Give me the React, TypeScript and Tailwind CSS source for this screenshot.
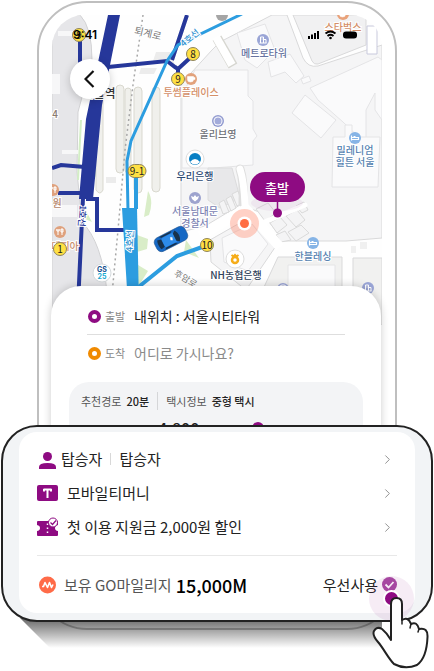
import { ReactNode } from "react";
import { ChevronRight } from "lucide-react";

const PURPLE = "#8e0b82";

function Exit({ x, y, n, w = 13 }: { x: number; y: number; n: string; w?: number }) {
  return (
    <g>
      <rect x={x - w / 2} y={y - 6.5} width={w} height={13} rx={6.5} fill="#ffe043" stroke="#8f845a" strokeWidth={1} />
      <text x={x} y={y + 4} textAnchor="middle" fontSize={10} fill="#222">
        {n}
      </text>
    </g>
  );
}

function Place({ x, y, color, lines, size = 10 }: { x: number; y: number; color: string; lines: string[]; size?: number }) {
  return (
    <text textAnchor="middle" fontSize={size} fontWeight={500} fill={color} stroke="#fff" strokeWidth={2} paintOrder="stroke">
      {lines.map((line, i) => (
        <tspan key={line} x={x} y={y + i * 12}>
          {line}
        </tspan>
      ))}
    </text>
  );
}

function Marker({ x, y, fill, kind }: { x: number; y: number; fill: string; kind: "cup" | "bed" | "building" | "fork" | "dot" | "shield" }) {
  return (
    <g transform={`translate(${x} ${y})`}>
      <circle r={6} fill={fill} />
      {kind === "cup" && <path d="M-3.5-2.500h6v3q0 2.500-3 2.500t-3-2.500zM2.500-1.500h1.500v2H2.500" fill="#fff" stroke="#fff" strokeWidth={0.5} />}
      {kind === "bed" && <path d="M-3.5-2.500v5M-3.500 1.500h7v-2h-7M-1.500-1.500h2" stroke="#fff" strokeWidth={1.200} fill="none" />}
      {kind === "building" && <path d="M-2.500 3v-6h3v6M.5-.5h2.500V3M-3.500 3h7M-1-1.500v1" stroke="#fff" fill="none" />}
      {kind === "fork" && <path d="M-2-3v6M-3.200-3v2h2.400v-2M2-3v6M1-3h2v3H1z" stroke="#fff" fill="none" />}
      {kind === "dot" && (
        <>
          <circle r={4.500} fill="#fff" />
          <circle r={3.500} fill="#a3abda" />
        </>
      )}
      {kind === "shield" && <path d="M-4-2l2.500 1L0-3l1.500 2L4-2 3 1 0 3.500-3 1z" fill="#fff" />}
    </g>
  );
}

function CityMap() {
  return (
    <svg
      viewBox="52 15 330 310"
      preserveAspectRatio="xMidYMin slice"
      className="block h-[310px] w-full rounded-t-[32px] font-['Noto_Sans_CJK_KR',sans-serif]"
      role="img"
      aria-label="지도"
    >
      <rect x={52} y={15} width={330} height={310} fill="#fefefe" />
      <path d="M52 15h28q12 12 12 45L78 112l-1 60 5 50q20 20 25 70v33H52z" fill="#e6e6e9" stroke="#d2d2d4" />
      <path d="M58 31h24v5H58zM62 150h16v4H62zM52 74h8v20h-8zM52 205h25v12H52z" fill="#f7f7f8" />
      <path d="M80 120h2l-3 60h-2zM84 207l8 15-9-4zM82 166h14v10l-8 16h-6z" fill="#d3eec5" />
      {/* Railway platforms */}
      <g fill="#f0f0ec" stroke="#d9d8cf">
        <path d="M96 100h7v90q-3 6-7 0z" />
        <rect x={116} y={85} width={8} height={88} rx={4} />
        <rect x={125} y={88} width={6} height={85} rx={3} />
        <rect x={134} y={87} width={8} height={106} rx={4} />
        <rect x={152} y={87} width={8} height={105} rx={4} />
      </g>
      <path d="M156 52h14l5 13-22-4zM141 68h16l-3 6h-15zM106 177h10v6h-10z" fill="#ececec" />
      {/* City blocks */}
      <g fill="#f5f5f6" stroke="#d9d9da">
        <path d="M181 232V84L212 50l8-8 52-27h15l16 43q5 10 15 8l64-21v193l-36 3h-62l-22-28-22-8-35 21z" />
        <path d="M293 15h73v30l-48 19q-4 1-6-3z" fill="#f1f1f2" />
        <path d="M210 240l42-24 26 27-32 47-35-28z" />
        <path d="M258 300l20-43h64v68h-84zM353 258h29v67h-29z" fill="#f1f1f0" />
      </g>
      <g fill="#fafafb" stroke="#e4e4e6">
        <path d="M182 95l13-25h53v26l5 5v28l4 7-4 5v24l-40 3h-31z" />
        <path d="M310 88l68-31 4 3v60l-7-10v-17l-9 17v34l-23-22-25-22z" />
        <path d="M305 95l31 25-15 18-29-25z" />
        <path d="M237 33l28-9 10 26-18 18-12-8z" />
        <path d="M268 62l22-8 14 22-8 7-11-11-14 5zM301 79l8-3 2 5-8 3z" />
        <path d="M333 137h12v-12h7v12h28l-2 50h-46z" />
        <path d="M222 238l30-14 16 20-20 27-24-9z" />
        <path d="M288 265h47v60h-47z" />
      </g>
      <path d="M208 168h24l8 30-20 10-12-8z" fill="#e8e8ea" stroke="#dcdcdd" />
      <g fill="#f4f4f5" stroke="#dadada">
        <path d="M219 203l5-3 5 12-6 2zM226 199l5-3 5 12-5 3zM232 194l6-3 4 12-5 3z" />
        <path d="M256 209l12-6 8 10-11 8zM270 223l10-6 7 8-10 8zM286 216l11-6 8 10-9 7zM288 232l13-7 8 8-13 8zM276 235l9-4 6 9-10 2zM296 206l8-4 4 8-6 3z" />
      </g>
      {/* Streets */}
      <g fill="none" strokeLinejoin="round">
        <path d="M217 38l16 28" stroke="#d6d6d0" strokeWidth={10} />
        <path d="M216 37l16 28" stroke="#fff" strokeWidth={8} />
        <path d="M240 169q4 12 3 34" stroke="#dedede" strokeWidth={9} strokeLinecap="round" />
        <path d="M240 169q4 12 5 36" stroke="#fff" strokeWidth={7} strokeLinecap="round" />
        <path d="M200 236l46-27 34 38" stroke="#fff" strokeWidth={10} />
        <path d="M262 223l43-18" stroke="#fff" strokeWidth={5} strokeLinecap="round" />
      </g>
      <path d="M367 26h10v28h-10z" fill="#fff" stroke="#c8c9dc" />
      <path d="M148 191q6 10 1 24l-5 2zM137 235l11 4-1 10-10 3zM138 265l10 6-10 16zM186 240l13 18-15-6z" fill="#d9edc8" />
      <path d="M360 242h7v7h-7zM351 246h5v7h-5z" fill="#f0f0f0" />
      <path d="M143 15l-10 70-8 65-7 80-7 75" fill="none" stroke="#a8a8a8" strokeWidth={1.500} strokeDasharray="2 3" />

      {/* Subway line 1 */}
      <path d="M108 15h12L102 105l-9 94H79l7-80z" fill="#26379a" />
      <g fill="none" stroke="#26379a" strokeWidth={4}>
        <path d="M83 198l-5 107M52 168l9-3 24 2M58 193h26M86 199h11v31h29M80 36v30M98 68l69-7 8 6 3 2 13-12M178 68v9M187 15l-15 45" />
      </g>
      {/* Subway line 4 */}
      <path d="M122 208h15l2 97h-11z" fill="#2c9de0" />
      <g fill="none" stroke="#2c9de0">
        <path d="M242 14l-64 31-11 16-36 80-4 20 1 50" strokeWidth={3} />
        <path d="M136 172v37M136 289l41-33 28-10" strokeWidth={4} />
      </g>

      <text x={148} y={37} transform="rotate(13 148 33)" textAnchor="middle" fontSize={10} fill="#777" stroke="#fff" strokeWidth={2} paintOrder="stroke">
        퇴계로
      </text>
      <text x={186} y={282} transform="rotate(31 186 278)" textAnchor="middle" fontSize={9} fill="#777" stroke="#fff" strokeWidth={2} paintOrder="stroke">
        후암로
      </text>
      <text x={190} y={41} transform="rotate(-39 190 38)" textAnchor="middle" fontSize={9} fontWeight={500} fill="#2c8fd0" stroke="#fff" strokeWidth={2} paintOrder="stroke">
        4호선
      </text>
      <text x={130} y={244} transform="rotate(-87 130 241)" textAnchor="middle" fontSize={9} fontWeight={500} fill="#2c8fd0" stroke="#fff" strokeWidth={2} paintOrder="stroke">
        4호선
      </text>
      <text x={82} y={219} transform="rotate(94 82 216)" textAnchor="middle" fontSize={9} fontWeight={500} fill="#26379a" stroke="#fff" strokeWidth={2} paintOrder="stroke">
        1호선
      </text>
      <text x={99} y={98} textAnchor="middle" fontSize={12} fontWeight={500} fill="#333" stroke="#fff" strokeWidth={2} paintOrder="stroke">
        서울역
      </text>

      <Marker x={191} y={79} fill="#e2a27c" kind="cup" />
      <Place x={191} y={96} color="#d48f68" lines={["투썸플레이스"]} />
      <Marker x={343} y={14} fill="#e9a27a" kind="cup" />
      <Place x={343} y={31} color="#d48f68" lines={["스타벅스"]} />
      <Marker x={263} y={40} fill="#9aa5d6" kind="building" />
      <Place x={264} y={57} color="#6672a0" lines={["메트로타워"]} />
      <circle cx={222} cy={15} r={6} fill="#a5a5a5" />
      <Marker x={218} y={121} fill="#929bd0" kind="dot" />
      <Place x={218} y={138} color="#6f7278" lines={["올리브영"]} />
      <Marker x={355} y={138} fill="#86b4e6" kind="bed" />
      <Place x={355} y={154} color="#547fb0" lines={["밀레니엄", "힐튼 서울"]} />
      <circle cx={195} cy={159} r={9} fill="#fff" stroke="#ddd" />
      <circle cx={195} cy={159} r={6} fill="#087fc4" />
      <path d="M190 162q5-6 10 0-5 5-10 0z" fill="#fff" />
      <Place x={195} y={180} color="#2c4a72" lines={["우리은행"]} />
      <Marker x={195} y={198} fill="#9da3ce" kind="shield" />
      <Place x={195} y={215} color="#7b82b2" lines={["서울남대문", "경찰서"]} />
      <circle cx={235} cy={259} r={9} fill="#fff" stroke="#ddd" />
      <path d="M231.500 255l2 1.500 1.500-1.500 1.500 1.500 2-1.500" fill="none" stroke="#f6ad19" strokeWidth={2} />
      <circle cx={235} cy={260} r={3} fill="none" stroke="#f6ad19" strokeWidth={2.500} />
      <Place x={236} y={279} color="#2f415a" lines={["NH농협은행"]} />
      <Marker x={313} y={243} fill="#86b4e6" kind="bed" />
      <Place x={313} y={260} color="#547fb0" lines={["한블레싱"]} />
      <Marker x={368} y={288} fill="#9aa5d6" kind="building" />
      <Marker x={283} y={289} fill="#9aa5d6" kind="dot" />
      <Marker x={53} y={190} fill="#dfa17d" kind="fork" />
      <Place x={57} y={207} color="#b58569" lines={["원"]} />
      <Marker x={60} y={232} fill="#dfa17d" kind="fork" />
      <Place x={65} y={250} color="#c98f6e" lines={["데피아"]} />
      <Place x={55} y={118} color="#8a7a70" lines={["4"]} />
      <circle cx={102} cy={273} r={9} fill="#fff" stroke="#d5dadd" />
      <text textAnchor="middle" fontSize={7} fontWeight={700} className="font-['Inter',sans-serif]">
        <tspan x={102} y={272} fill="#17508f">GS</tspan>
        <tspan x={102} y={279} fill="#16a9d1">25</tspan>
      </text>
      <Exit x={79} y={35} n="9" />
      <Exit x={193} y={54} n="8" />
      <Exit x={178} y={79} n="9" />
      <Exit x={137} y={171} n="9-1" w={18} />
      <Exit x={207} y={245} n="10" />
      <Exit x={60} y={249} n="1" />

      {/* Taxi */}
      <g transform="translate(171 239) rotate(-27)">
        <rect x={-17} y={-7.5} width={34} height={15} rx={5} fill="#1668c4" stroke="#1c4f86" strokeWidth={0.5} />
        <rect x={-9} y={-5} width={15} height={10} rx={2} fill="#2c8bea" />
        <path d="M-13-5l4 1v8l-4 1q-2-5 0-10zM7-6L4-4v8l3 2q4-6 0-12z" fill="#18324c" />
        <path d="M-10-7H4L2-5.500h-10zM-10 7H4L2 5.500h-10z" fill="#18324c" />
        <path d="M0-2l2 1-1 3-2-1z" fill="#fff" />
      </g>

      {/* Current position */}
      <circle cx={244.500} cy={223.500} r={14.500} fill="#ff7b5c" opacity={0.350} />
      <circle cx={244.500} cy={223.500} r={7} fill="#fff" />
      <circle cx={244.500} cy={223.500} r={4.500} fill="#ff6d43" />

      {/* Departure pin */}
      <ellipse cx={277} cy={203} rx={26} ry={8} fill={PURPLE} opacity={0.060} />
      <path d="M277.500 200v12" stroke={PURPLE} strokeWidth={1.500} />
      <circle cx={277.500} cy={213} r={4.500} fill={PURPLE} />
      <rect x={250} y={172} width={55} height={30} rx={15} fill={PURPLE} />
      <text x={277} y={193} textAnchor="middle" fontSize={13} fontWeight={500} fill="#fff">
        출발
      </text>
    </svg>
  );
}

function StatusBar() {
  return (
    <div className="absolute inset-x-0 top-3 flex h-4 items-center justify-between pl-[21px] pr-6">
      <span className="font-['Inter',sans-serif] text-xs font-semibold text-black">9:41</span>
      <svg width="50" height="12" viewBox="0 0 50 12" aria-hidden="true">
        <path d="M0 7h2v3H0zM3 5.500h2V10H3zM6 4h2v6H6zM9 2h2v8H9z" />
        <path d="M17.500 4.500q5-4 10 0M19.500 7q3-2.500 6 0" fill="none" stroke="#000" strokeWidth="1.800" />
        <circle cx="22.500" cy="9" r="1.300" />
        <rect x="35" y="2.500" width="14" height="7" rx="3" />
      </svg>
    </div>
  );
}

function RouteField({ id, label, ring, children }: { id: string; label: string; ring: string; children: ReactNode }) {
  return (
    <div className="flex h-9 items-center">
      <span className={`ml-px size-[13px] shrink-0 rounded-full border-4 ${ring}`} />
      <label htmlFor={id} className="ml-1 w-[29px] shrink-0 text-[11px] text-[#888]">
        {label}
      </label>
      {children}
    </div>
  );
}

function Row({ icon, children }: { icon: ReactNode; children: ReactNode }) {
  return (
    <button type="button" className="flex h-[34px] w-full items-center text-left">
      {icon}
      <span className="flex flex-1 items-center">{children}</span>
      <ChevronRight className="mr-0.5 size-[15px] text-[#8a8a8a]" strokeWidth={1.500} />
    </button>
  );
}

export default function App() {
  return (
    <main className="relative w-full overflow-hidden bg-white pb-[41px] pt-px font-['Noto_Sans_CJK_KR',sans-serif] text-[#222]">
      <section className="mx-[37px] overflow-hidden rounded-[50px] border-2 border-[#bfbfbf] px-[13px] pb-6 pt-3">
        <div className="relative">
          <CityMap />
          <StatusBar />
          <button
            type="button"
            aria-label="뒤로"
            className="absolute left-[18px] top-11 flex size-10 items-center justify-center rounded-full bg-white shadow-[0_2px_8px_rgba(0,0,0,0.2)]"
          >
            <svg width="12" height="18" viewBox="0 0 12 18" fill="none" stroke="#111" strokeWidth="2.200">
              <path d="M9.500 1L1.500 9l8 8" />
            </svg>
          </button>
        </div>
        <form className="relative -ml-px mr-px -mt-[39px] rounded-t-[30px] bg-white px-[18px] pt-3 shadow-[0_0_8px_rgba(0,0,0,0.2)]">
          <div className="px-[18px]">
            <RouteField id="from" label="출발" ring="border-[#8e0b82]">
              <input id="from" readOnly value="내위치 : 서울시티타워" className="w-full min-w-0 text-sm outline-none" />
            </RouteField>
            <hr className="border-[#dedede]" />
            <RouteField id="to" label="도착" ring="border-[#f08a00]">
              <input id="to" placeholder="어디로 가시나요?" className="w-full min-w-0 text-sm outline-none placeholder:text-[#8a8a8a]" />
            </RouteField>
          </div>
          <div className="mt-[11px] h-[222px] rounded-[20px] bg-[#f3f4f6] px-3 pt-2.5 text-[11px]">
            <div className="flex h-[18px] items-center">
              <span className="text-[#555]">추천경로</span>
              <b className="ml-[5px] font-medium">20분</b>
              <span className="mx-2 h-[18px] w-px bg-[#d5d6d8]" />
              <span className="text-[#555]">택시정보</span>
              <b className="ml-[5px] font-medium">중형 택시</b>
            </div>
            <div className="ml-[77px] mt-1.5 flex items-center text-base font-medium leading-6">
              <span>4,800</span>
              <span className="ml-[53px] size-3 rounded-full bg-[#8e0b82]" />
            </div>
          </div>
        </form>
      </section>

      {/* Cast shadow below the raised card */}
      <div className="absolute left-5 right-[52px] top-[618px] h-[30px] bg-linear-to-b from-black/60 to-transparent [clip-path:polygon(0_0,100%_0,100%_100%,30px_100%)]" />

      <section className="absolute inset-x-px top-[425px] rounded-[36px] border-2 border-[#222] bg-[#f2f4f6] px-4 pb-[7px] pt-[5px]">
        <div className="rounded-[18px] bg-white px-[18px] pt-[10px]">
          <Row
            icon={
              <svg width="24" height="20" viewBox="0 0 24 20" fill={PURPLE} className="shrink-0">
                <circle cx="10.500" cy="7.500" r="4.500" />
                <path d="M2 20v-2q0-4 8.500-4t8.500 4v2z" />
              </svg>
            }
          >
            <span className="text-[15px] leading-5">탑승자</span>
            <span className="mx-2 h-3 w-px bg-[#d8d8d8]" />
            <span className="text-[15px] leading-5">탑승자</span>
          </Row>
          <Row
            icon={
              <svg width="30" height="18" viewBox="0 0 30 18" className="shrink-0">
                <rect y="1" width="21" height="16" rx="2" fill={PURPLE} />
                <path d="M6.500 5.500h8M7 5v2.500M14 5v2.500M10.500 5v9" fill="none" stroke="#fff" strokeWidth="2" />
              </svg>
            }
          >
            <span className="text-[15px] leading-5">모바일티머니</span>
          </Row>
          <Row
            icon={
              <svg width="30" height="20" viewBox="0 0 30 20" className="shrink-0">
                <path d="M1 4h19q1 0 1 1v3q-3 .5-3 3t3 3v4q0 1-1 1H1q-1 0-1-1v-4q3-.5 3-3T0 8V5q0-1 1-1z" fill={PURPLE} />
                <path d="M10.500 6.500v11" stroke="#fff" strokeWidth="1.500" strokeDasharray="1.500 2.500" />
                <circle cx="16" cy="5.500" r="4.500" fill="#fff" stroke={PURPLE} />
                <path d="M13.500 5.500l2 2 3.500-4" fill="none" stroke={PURPLE} strokeWidth="1.200" />
              </svg>
            }
          >
            <span className="text-[15px] leading-5">첫 이용 지원금 2,000원 할인</span>
          </Row>
          <hr className="mt-[11px] border-[#e8e8e8]" />
          <div className="flex h-[57px] items-center">
            <svg width="27" height="18" viewBox="0 0 27 18" className="shrink-0">
              <circle cx="10.500" cy="9" r="8.500" fill="#ff6b48" />
              <path d="M5 10.500h1.500l1.500-4 2.500 5 2-5 2 5 1.500-3" fill="none" stroke="#fff" strokeWidth="1.600" strokeLinejoin="round" />
            </svg>
            <span className="text-[15px] leading-5 text-[#555]">보유 GO마일리지</span>
            <strong className="ml-1 text-lg font-medium leading-5 text-black">15,000M</strong>
            <label htmlFor="mileage" className="ml-auto text-[15px] leading-5">
              우선사용
            </label>
            <span className="relative ml-1 flex size-[15px]">
              <input id="mileage" type="checkbox" defaultChecked className="size-[15px] appearance-none rounded-full bg-[#a94ca4]" />
              <svg viewBox="0 0 15 15" className="pointer-events-none absolute inset-0" fill="none" stroke="#fff" strokeWidth="1.800">
                <path d="M3.500 7.500l3 3 5-5.500" />
              </svg>
            </span>
          </div>
        </div>
      </section>

      {/* Tap gesture */}
      <svg className="pointer-events-none absolute right-0 top-[574px]" width="68" height="97" viewBox="366 574 68 97" aria-hidden="true">
        <circle cx="391.500" cy="598.500" r="22.500" fill={PURPLE} opacity="0.080" />
        <circle cx="391.500" cy="598.500" r="7.500" fill={PURPLE} stroke="#fff" strokeWidth="2" />
        <path
          d="M391 640V604Q391 598 396.500 598T402 604V620Q408 616 411 624Q417 621 419 629Q428 627 427.500 637C427 650 424 660 417 665Q405 670 394 664C388 658 384 649 378 642Q372 635 374 631Q377 626 382 629Q387 633 391 640Z"
          fill="#fff"
          stroke="#222"
          strokeWidth="2"
          strokeLinejoin="round"
        />
        <path d="M402 620v4M411 624l-1 4M419 629l-1 3" fill="none" stroke="#222" strokeWidth="1.500" strokeLinecap="round" />
      </svg>
    </main>
  );
}
